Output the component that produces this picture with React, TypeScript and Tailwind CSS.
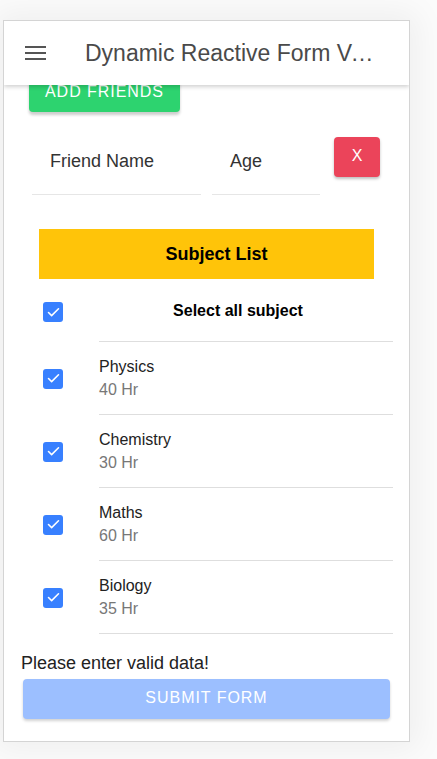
import { Check } from 'lucide-react';

const subjects = [
  { name: 'Physics', hours: '40 Hr' },
  { name: 'Chemistry', hours: '30 Hr' },
  { name: 'Maths', hours: '60 Hr' },
  { name: 'Biology', hours: '35 Hr' },
];

function CheckBox() {
  return (
    <div className="flex h-[20px] w-[20px] shrink-0 items-center justify-center rounded-[3px] bg-[#3880ff]">
      <Check className="h-[15px] w-[15px] text-white" strokeWidth={2.5} />
    </div>
  );
}

export default function App() {
  return (
    <div className="min-h-screen w-[437px] bg-[#fbfbfb] pl-[3px] pt-[20px] font-['Liberation_Sans',Arial,sans-serif]">
      <div className="flex h-[722px] w-[407px] flex-col overflow-hidden border border-[#d4d4d4] bg-white shadow-[0_0_30px_8px_rgba(0,0,0,0.05)]">
        {/* Toolbar */}
        <header className="relative z-10 flex h-[64px] shrink-0 items-center bg-white shadow-[0_2px_4px_rgba(0,0,0,0.18)]">
          <svg className="ml-[21px] h-[15px] w-[21px] shrink-0" viewBox="0 0 21 15" fill="#555">
            <rect x="0" y="0" width="21" height="2" />
            <rect x="0" y="6" width="21" height="2" />
            <rect x="0" y="12" width="21" height="2" />
          </svg>
          <h1 className="ml-[39px] w-[292px] truncate text-[23px] leading-[27px] text-[#4a4a4a]">
            Dynamic Reactive Form Validation
          </h1>
        </header>

        {/* Content (scrolled) */}
        <div className="-mt-[9px] flex flex-col">
          <button className="ml-[25px] flex h-[36px] w-[151px] items-center justify-center rounded-[4px] bg-[#2dd36f] pb-[5px] text-[16px] tracking-[0.06em] text-white shadow-[0_3px_3px_rgba(0,0,0,0.2)]">
            ADD FRIENDS
          </button>

          <div className="ml-[28px] mt-[25px] flex items-start">
            <div className="h-[58px] w-[169px] border-b border-[#e6e6e6] pl-[18px] pt-[13px] text-[18px] leading-[22px] text-[#333]">
              Friend Name
            </div>
            <div className="ml-[11px] h-[58px] w-[108px] border-b border-[#e6e6e6] pl-[18px] pt-[13px] text-[18px] leading-[22px] text-[#333]">
              Age
            </div>
            <button className="ml-[14px] flex h-[40px] w-[46px] items-center justify-center rounded-[4px] bg-[#eb445a] pb-[2px] text-[16px] text-white shadow-[0_2px_3px_rgba(0,0,0,0.25)]">
              X
            </button>
          </div>

          <div className="ml-[35px] mt-[34px] flex h-[50px] w-[335px] items-center justify-center bg-[#ffc409] pl-[20px] text-[18px] font-bold text-black">
            Subject List
          </div>

          {/* Select all */}
          <div className="flex h-[63px] items-stretch pl-[39px] pr-[16px]">
            <div className="flex items-center pt-[3px]">
              <CheckBox />
            </div>
            <div className="ml-[36px] flex flex-1 items-center justify-center border-b border-[#dedede] pr-[16px] pt-[1px] text-[16px] font-bold text-black">
              Select all subject
            </div>
          </div>

          {subjects.map((s) => (
            <div key={s.name} className="flex h-[73px] items-stretch pl-[39px] pr-[16px]">
              <div className="flex items-center">
                <CheckBox />
              </div>
              <div className="ml-[36px] flex flex-1 flex-col justify-center border-b border-[#dedede]">
                <div className="text-[16px] leading-[20px] text-[#222]">{s.name}</div>
                <div className="mt-[3px] text-[16px] leading-[20px] text-[#777]">{s.hours}</div>
              </div>
            </div>
          ))}

          <p className="ml-[17px] mt-[19px] text-[18px] leading-[21px] text-[#222]">Please enter valid data!</p>

          <button className="ml-[19px] mt-[5px] flex h-[40px] w-[367px] items-center justify-center rounded-[4px] bg-[#9cbfff] pb-[2px] text-[16px] tracking-[0.06em] text-white shadow-[0_2px_3px_rgba(0,0,0,0.18)]">
            SUBMIT FORM
          </button>
        </div>
      </div>
    </div>
  );
}
